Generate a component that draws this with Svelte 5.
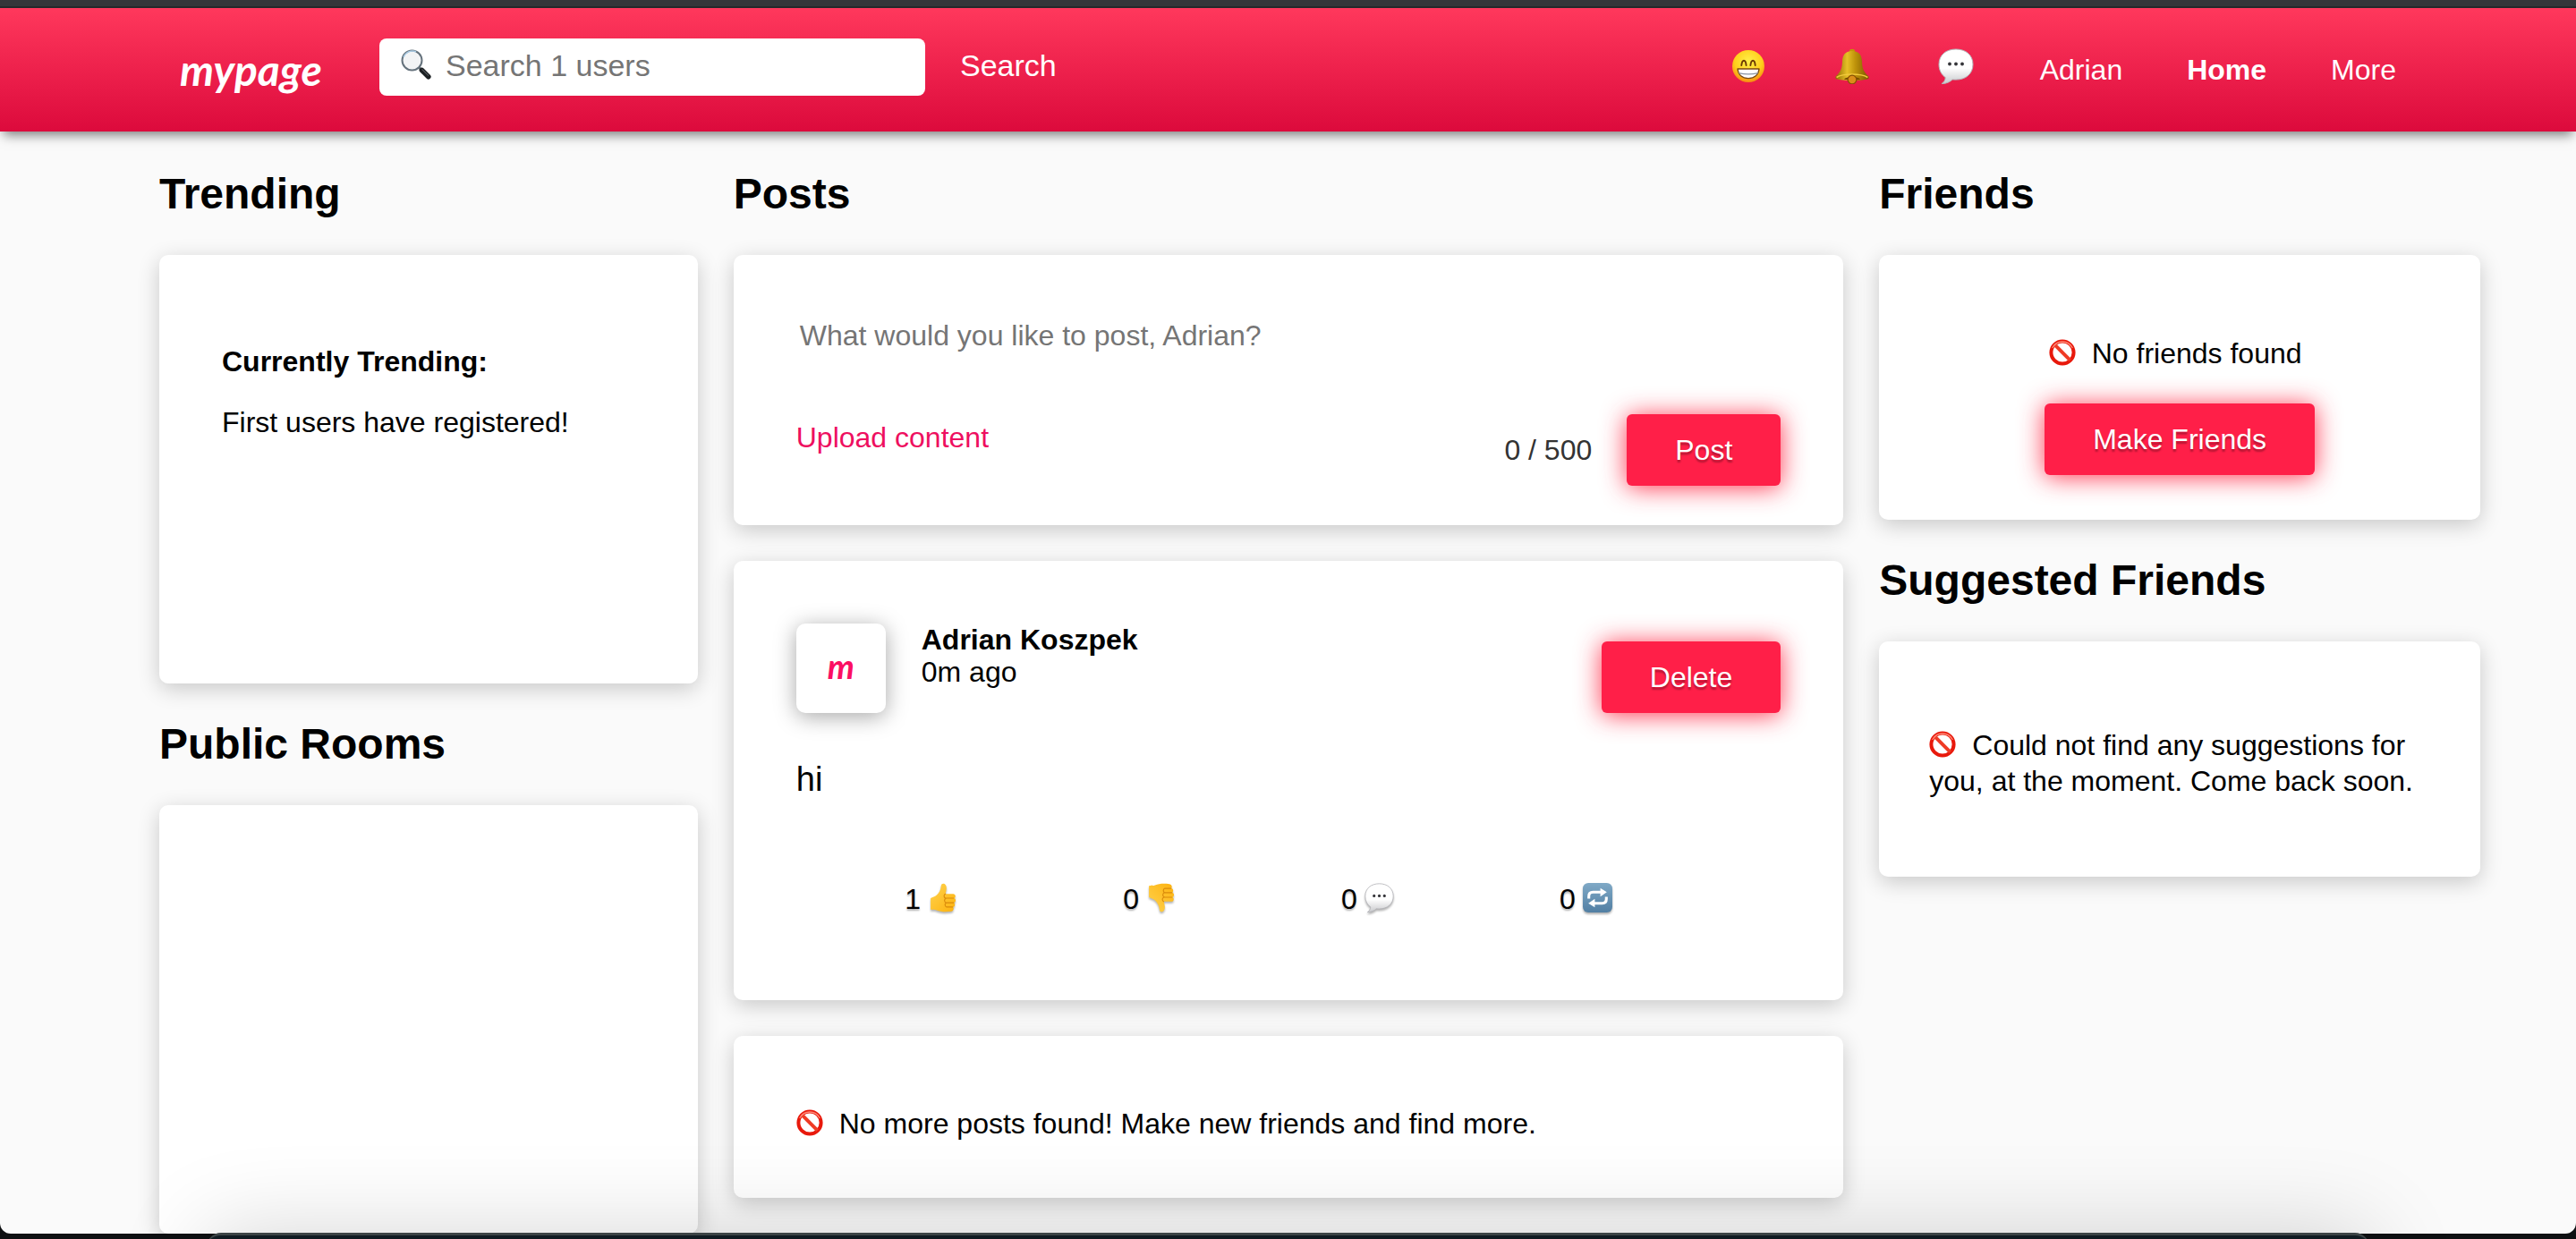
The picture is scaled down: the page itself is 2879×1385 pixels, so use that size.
<script>
  let query = $state('');
  let draft = $state('');

  const reactions = [
    { count: 1, icon: 'up', label: 'Like' },
    { count: 0, icon: 'down', label: 'Dislike' },
    { count: 0, icon: 'bubble', label: 'Comment' },
    { count: 0, icon: 'repeat', label: 'Share' }
  ];
</script>

{#snippet banned()}
  <svg class="inline-icon" viewBox="0 0 30 30" aria-hidden="true">
    <circle cx="15" cy="15" r="12.6" fill="none" stroke="#e8190c" stroke-width="4" />
    <path d="M6.4 6.4 23.6 23.6" stroke="#ef3b25" stroke-width="4" />
    <path d="M4 9.500A12.600 12.600 0 0 1 26 9.500" fill="none" stroke="#ff8a78" stroke-width="1.400" stroke-linecap="round" />
  </svg>
{/snippet}

{#snippet bubble()}
  <path d="M20 1C9 1 1 7.400 1 18c0 6.800 3.200 11.800 7.200 14.500C8.300 35.500 6.500 37.800 4 39.600c5 .2 9.800-2.400 12-4.700 1.300.2 2.600.2 4 .2 11 0 19-6.600 19-17.100S31 1 20 1Z" fill="url(#bubble-fill)" stroke="#b4b4b8" stroke-width="1" />
  <g fill="#35353a"><circle cx="13" cy="17.500" r="1.900" /><circle cx="20" cy="17.500" r="1.900" /><circle cx="27" cy="17.500" r="1.900" /></g>
{/snippet}

{#snippet thumb()}
  <path d="M3 16.500c2-1 4.600-1.500 6.600-3.300 2.600-2.600 4.400-5.600 4.700-9.800C14.500 1 16 .5 17.300.8c2.500.7 3.200 3.600 2.800 6.200-.2 1.700-.7 3.300-1 4.800h8.400c2.700 0 3.200 3.800 1 4.700 2.400.9 2 4.500-.2 5 1.600 1.200 1.200 4.200-1 4.600 1.200 1.600.4 4.300-2.200 4.700-5.600.8-11.200.6-15.500-1.300-2-.8-4.400-.4-6.600-.6Z" fill="url(#thumb-fill)" />
  <path d="M19 11.800c-1.600.6-2.300 3.700.2 4.700h8.600M19.600 16.600c-2.200 1-2 4 .2 4.900h8M20 21.500c-2 .8-1.800 3.800.3 4.600h6.400" fill="none" stroke="#d98a0b" stroke-width="1.100" stroke-linecap="round" />
{/snippet}

<svg class="defs" aria-hidden="true">
  <defs>
    <linearGradient id="bubble-fill" x1="0" y1="0" x2="0" y2="1"><stop offset=".55" stop-color="#fff" /><stop offset="1" stop-color="#c9cacd" /></linearGradient>
    <linearGradient id="thumb-fill" x1="0" y1="0" x2="1" y2="1"><stop offset="0" stop-color="#ffd34f" /><stop offset="1" stop-color="#fdb20e" /></linearGradient>
    <radialGradient id="face-fill" cx=".5" cy=".35" r=".65"><stop offset="0" stop-color="#fff04a" /><stop offset=".65" stop-color="#ffcf1b" /><stop offset="1" stop-color="#f78a12" /></radialGradient>
    <linearGradient id="bell-fill"><stop offset="0" stop-color="#8e6a00" /><stop offset=".35" stop-color="#e6bf26" /><stop offset=".6" stop-color="#bd920a" /><stop offset="1" stop-color="#7b5600" /></linearGradient>
    <linearGradient id="repeat-fill" x1="0" y1="0" x2="0" y2="1"><stop offset="0" stop-color="#7fa9c6" /><stop offset="1" stop-color="#527fa3" /></linearGradient>
  </defs>
</svg>

<div class="screen">
  <div class="titlebar"></div>
  <div class="window">
    <header>
      <a class="logo" href="#home">mypage</a>
      <form class="search" role="search" onsubmit={(e) => e.preventDefault()}>
        <div class="search-box">
          <svg viewBox="0 0 34 34" aria-hidden="true">
            <path d="M20.500 20.500 24 24" stroke="#687078" stroke-width="3" />
            <path d="M23.500 23.500 30.800 30.800" stroke="#1c2023" stroke-width="5.600" stroke-linecap="round" />
            <path d="M23.600 22.400 31 29.600" stroke="#676d72" stroke-width="1" />
            <circle cx="12.500" cy="12.500" r="11" fill="#f3f4f5" stroke="#66737d" stroke-width="2" />
            <path d="M3 9A10.500 10.500 0 0 1 17 2.800" fill="none" stroke="#a9cbe4" stroke-width="1.500" />
          </svg>
          <input type="text" aria-label="Search users" placeholder="Search 1 users" bind:value={query} />
        </div>
        <button class="search-button" type="submit">Search</button>
      </form>
      <nav>
        <a class="nav-icon" href="#mood" aria-label="Mood">
          <svg viewBox="0 0 36 36">
            <circle cx="18" cy="18" r="18" fill="url(#face-fill)" />
            <path d="M10.300 17c.4-3.400 1.400-5.200 2.700-5.200s2.300 1.800 2.600 5.200M20.400 17c.4-3.400 1.400-5.200 2.700-5.200s2.300 1.800 2.600 5.200" fill="none" stroke="#6b3a04" stroke-width="1.900" stroke-linecap="round" />
            <path d="M6 21h24c-.6 6.600-5.200 10.600-12 10.600S6.600 27.600 6 21Z" fill="#fff" stroke="#7c4a14" stroke-width="1.400" stroke-linejoin="round" />
            <path d="M7.200 25.600c6.600 1.500 15 1.500 21.600 0" fill="none" stroke="#8a94a3" stroke-width="1.200" />
          </svg>
        </a>
        <a class="nav-icon" href="#notifications" aria-label="Notifications">
          <svg viewBox="0 0 40 40">
            <ellipse cx="20" cy="3" rx="3" ry="2.200" fill="#c29408" />
            <path d="M20 3C12 3 9.200 8 9 14.500 8.800 22 7.500 26 2 31c-1.200 1.400-.8 3.300 1 3.600 10 2 24 2 34 0 1.800-.3 2.200-2.200 1-3.600-5.500-5-6.800-9-7-16.500C30.800 8 28 3 20 3Z" fill="url(#bell-fill)" />
            <path d="M2.600 32.500c4-2.400 10-3.400 17.400-3.400s13.400 1 17.400 3.400" fill="none" stroke="#f0c83c" stroke-width="1.500" />
            <path d="M11 34.500c2-3.500 16-3.500 18 0-2 1.300-16 1.300-18 0Z" fill="#7a4c03" />
            <circle cx="20" cy="35" r="4.800" fill="#dc8d19" stroke="#865004" stroke-width="1.200" />
          </svg>
        </a>
        <a class="nav-icon" href="#messages" aria-label="Messages">
          <svg viewBox="0 0 40 40">{@render bubble()}</svg>
        </a>
        <a href="#profile">Adrian</a>
        <a class="current" href="#home" aria-current="page">Home</a>
        <a href="#more">More</a>
      </nav>
    </header>

    <main>
      <section>
        <h2>Trending</h2>
        <div class="card side-card">
          <h3>Currently Trending:</h3>
          <p>First users have registered!</p>
        </div>
        <h2>Public Rooms</h2>
        <div class="card side-card"></div>
      </section>

      <section>
        <h2>Posts</h2>
        <div class="stack">
          <form class="card composer" onsubmit={(e) => e.preventDefault()}>
            <textarea aria-label="New post" placeholder="What would you like to post, Adrian?" maxlength="500" bind:value={draft}></textarea>
            <div class="composer-row">
              <a class="upload" href="#upload">Upload content</a>
              <span class="counter">{draft.length} / 500</span>
              <button class="primary" type="submit">Post</button>
            </div>
          </form>

          <article class="card post">
            <div class="post-head">
              <div class="avatar">m</div>
              <div class="byline">
                <strong>Adrian Koszpek</strong>
                <span>0m ago</span>
              </div>
              <button class="primary delete" type="button">Delete</button>
            </div>
            <p class="post-text">hi</p>
            <div class="reactions">
              {#each reactions as r}
                <button type="button" aria-label="{r.label}: {r.count}">
                  <span>{r.count}</span>
                  {#if r.icon === 'up'}
                    <svg viewBox="0 0 32 32">{@render thumb()}</svg>
                  {:else if r.icon === 'down'}
                    <svg viewBox="0 0 32 32"><g transform="matrix(1 0 0 -1 0 32)">{@render thumb()}</g></svg>
                  {:else if r.icon === 'bubble'}
                    <svg viewBox="0 0 40 40">{@render bubble()}</svg>
                  {:else}
                    <svg viewBox="0 0 32 32">
                      <rect width="32" height="32" rx="6" fill="url(#repeat-fill)" />
                      <path d="M6.500 17v-2.500c0-3 1.500-4.500 4.500-4.500h9M25.500 15v2.500c0 3-1.500 4.500-4.500 4.500h-9" fill="none" stroke="#fff" stroke-width="3" />
                      <path d="M19 5.500 26 10l-7 4.700ZM13 17.300 6 22l7 4.500Z" fill="#fff" />
                    </svg>
                  {/if}
                </button>
              {/each}
            </div>
          </article>

          <div class="card end-card">
            <p>{@render banned()}No more posts found! Make new friends and find more.</p>
          </div>
        </div>
      </section>

      <section>
        <h2>Friends</h2>
        <div class="card friends">
          <p>{@render banned()}No friends found</p>
          <button class="primary" type="button">Make Friends</button>
        </div>
        <h2>Suggested Friends</h2>
        <div class="card suggestions">
          <p>{@render banned()}Could not find any suggestions for you, at the moment. Come back soon.</p>
        </div>
      </section>
    </main>
  </div>
  <div class="dock"></div>
</div>

<style>
  :global(body) {
    margin: 0;
    background: #0e1012;
  }
  .screen,
  .screen :global(*) {
    box-sizing: border-box;
  }
  .screen {
    height: 100vh;
    overflow: hidden;
    position: relative;
    display: flex;
    flex-direction: column;
    padding-bottom: 6px;
    font-family: 'Liberation Sans', Arial, sans-serif;
    font-size: 32px;
    line-height: 36px;
    color: #000;
  }
  .defs {
    position: absolute;
    width: 0;
    height: 0;
  }
  .titlebar {
    flex: none;
    height: 9px;
    background: #35363a;
    border-bottom: 2px solid #25282b;
  }
  .window {
    flex: 1;
    min-height: 0;
    overflow: hidden;
    background: #fafafa;
    border-radius: 0 0 12px 12px;
  }
  h2,
  h3,
  p {
    margin: 0;
  }
  a {
    color: inherit;
    text-decoration: none;
  }
  button {
    border: 0;
    margin: 0;
    font: inherit;
    cursor: pointer;
  }

  header {
    display: flex;
    align-items: center;
    height: 138px;
    padding: 0 201px;
    color: #fff;
    background: linear-gradient(#ff385c, #dc0a3c);
    box-shadow: 0 8px 12px -4px rgba(0, 0, 0, 0.5);
  }
  .logo {
    width: 160px;
    margin-right: 63px;
    font: italic 700 48px/64px Lato, sans-serif;
  }
  .search {
    display: flex;
    align-items: center;
    padding-bottom: 6px;
    font-size: 34px;
  }
  .search-box {
    display: flex;
    align-items: center;
    gap: 16px;
    width: 610px;
    height: 64px;
    padding: 0 24px;
    border-radius: 8px;
    background: #fff;
  }
  .search-box svg {
    flex: none;
    width: 34px;
    height: 34px;
    margin-bottom: 6px;
  }
  input {
    flex: 1;
    min-width: 0;
    height: 60px;
    padding: 0 0 4px;
    border: 0;
    outline: 0;
    background: none;
    font: inherit;
  }
  input::placeholder,
  textarea::placeholder {
    color: #757575;
    opacity: 1;
  }
  .search-button {
    padding: 0 39px 4px;
    background: none;
    color: inherit;
  }
  nav {
    display: flex;
    align-items: center;
    gap: 72px;
    margin-left: auto;
  }
  .nav-icon {
    display: flex;
    justify-content: center;
    width: 44px;
    padding-bottom: 8px;
  }
  .nav-icon svg {
    width: 40px;
    height: 40px;
  }
  .nav-icon:first-child svg {
    width: 36px;
  }
  .current {
    font-weight: 700;
  }

  main {
    display: grid;
    grid-template-columns: 602fr 1241fr 672fr;
    gap: 40px;
    padding: 2px 107px 0 178px;
  }
  h2 {
    padding: 40px 0;
    font-size: 48px;
    line-height: 56px;
  }
  .card {
    border-radius: 10px;
    background: #fff;
    box-shadow: 0 6px 24px rgba(0, 0, 0, 0.2);
  }
  .stack {
    display: flex;
    flex-direction: column;
    gap: 40px;
  }
  .side-card {
    height: 479px;
    padding: 101px 70px;
  }
  h3 {
    margin-bottom: 32px;
    font-size: 32px;
  }
  .primary {
    height: 80px;
    padding: 0 54px;
    border-radius: 6px;
    background: #ff1f48;
    color: #fff;
    text-shadow: 0 3px 2px rgba(0, 0, 0, 0.3);
    box-shadow: 0 2px 28px rgba(255, 31, 60, 0.9);
  }

  .composer {
    padding: 68px 70px 44px;
  }
  textarea {
    display: block;
    width: 100%;
    height: 110px;
    padding: 4px;
    border: 0;
    outline: 0;
    resize: none;
    background: none;
    font: inherit;
  }
  .composer-row {
    display: flex;
    align-items: center;
  }
  .upload {
    margin-right: auto;
    padding-bottom: 28px;
    color: #ee0f5f;
  }
  .counter {
    margin-right: 39px;
    color: #333;
  }

  .post {
    padding: 70px 70px 94px;
  }
  .post-head {
    display: flex;
    align-items: flex-start;
  }
  .avatar {
    flex: none;
    width: 100px;
    height: 100px;
    margin-right: 40px;
    border-radius: 10px;
    background: #fff;
    box-shadow: 0 4px 24px rgba(0, 0, 0, 0.35);
    color: #fb0f63;
    font: italic 700 38px/94px Lato, sans-serif;
    text-align: center;
  }
  .byline {
    display: flex;
    flex-direction: column;
    margin-right: auto;
  }
  .delete {
    margin-top: 20px;
  }
  .post-text {
    padding: 52px 0 92px;
    font-size: 38px;
    line-height: 44px;
  }
  .reactions {
    display: grid;
    grid-template-columns: repeat(4, 1fr);
    padding: 0 96px 0 29px;
  }
  .reactions button {
    display: flex;
    justify-content: center;
    align-items: center;
    gap: 8px;
    height: 39px;
    padding: 0;
    background: none;
    color: #000;
    text-shadow: 0 2px 2px rgba(0, 0, 0, 0.3);
  }
  .reactions svg {
    width: 33px;
    height: 33px;
    margin-bottom: 3px;
    filter: drop-shadow(0 2px 1px rgba(0, 0, 0, 0.3));
  }

  .inline-icon {
    width: 30px;
    height: 30px;
    margin-right: 18px;
    vertical-align: -3px;
  }
  .end-card {
    padding: 80px 70px 65px;
  }
  .friends {
    display: flex;
    flex-direction: column;
    align-items: center;
    gap: 38px;
    padding: 92px 60px 50px;
  }
  .friends p {
    margin-right: 10px;
  }
  .suggestions {
    padding: 96px 56px 87px;
    line-height: 40px;
  }

  .dock {
    position: absolute;
    bottom: -140px;
    left: 231px;
    right: 231px;
    height: 147px;
    border-top: 3px solid #3c4446;
    border-radius: 16px;
    background: #101b22;
    box-shadow: 0 0 100px rgba(0, 0, 0, 0.17);
  }
</style>
